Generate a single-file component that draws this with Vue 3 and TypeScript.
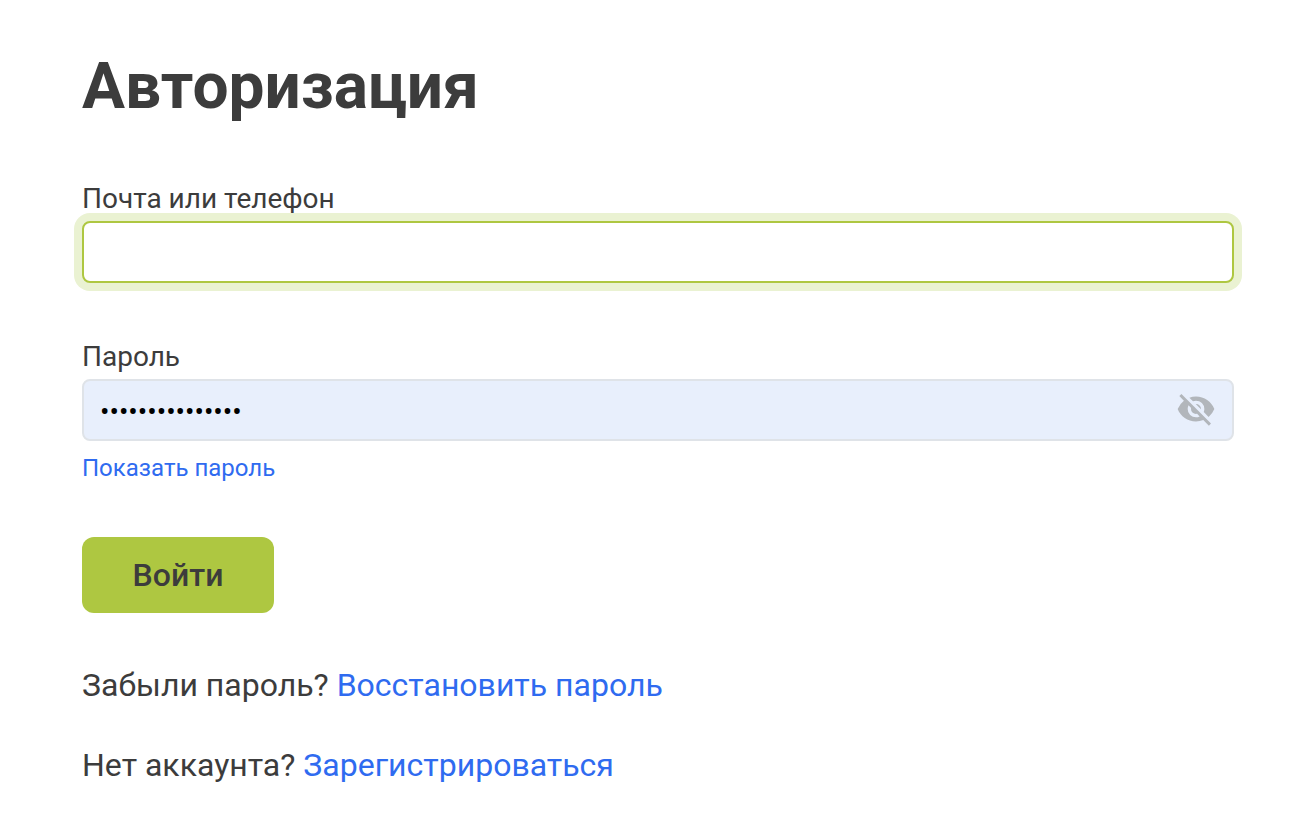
<script setup lang="ts">
const title: string = 'Авторизация'
</script>

<template>
  <main class="page">
    <h1 class="title">{{ title }}</h1>
    <form class="form" @submit.prevent>
      <div class="field first">
        <label class="label" for="login">Почта или телефон</label>
        <input id="login" class="input focused" type="text" />
      </div>
      <div class="field second">
        <label class="label" for="password">Пароль</label>
        <div class="password-box">
          <input id="password" class="input filled" type="password" value="•••••••••••••••" />
          <svg class="eye" viewBox="0 0 24 24" width="40" height="40" aria-hidden="true">
            <path fill="#b2b6bb" d="M12 7a5 5 0 0 1 5 5c0 .65-.13 1.26-.36 1.83l2.92 2.92A11.82 11.82 0 0 0 23 12c-1.73-4.39-6-7.5-11-7.5-1.4 0-2.74.25-3.98.7l2.16 2.16C10.74 7.13 11.35 7 12 7zM2 4.27l2.28 2.28.46.46A11.8 11.8 0 0 0 1 12c1.73 4.39 6 7.5 11 7.5 1.55 0 3.03-.3 4.38-.84l.42.42L19.73 22 21 20.73 3.27 3 2 4.27zM7.53 9.8l1.55 1.55A2.82 2.82 0 0 0 9 12a3 3 0 0 0 3 3c.22 0 .44-.03.65-.08l1.55 1.55c-.67.33-1.41.53-2.2.53a5 5 0 0 1-5-5c0-.79.2-1.53.53-2.2zm4.31-.78l3.15 3.15.02-.16a3 3 0 0 0-3-3l-.17.01z"/>
          </svg>
        </div>
        <a class="show" href="#">Показать пароль</a>
      </div>
      <button class="submit" type="submit">Войти</button>
    </form>
    <p class="line forgot">Забыли пароль? <a href="#">Восстановить пароль</a></p>
    <p class="line register">Нет аккаунта? <a href="#">Зарегистрироваться</a></p>
  </main>
</template>

<style>
html, body { margin: 0; background: #fff; }
</style>

<style scoped>
.page {
  box-sizing: border-box;
  width: 1314px;
  height: 836px;
  padding: 49px 80px 0 82px;
  font-family: Roboto, "Liberation Sans", sans-serif;
  color: #3c3c3c;
  overflow: hidden;
}
.title {
  margin: 0;
  font-size: 64px;
  line-height: 76px;
  font-weight: 700;
}
.form { display: flex; flex-direction: column; align-items: flex-start; }
.field { width: 100%; display: flex; flex-direction: column; }
.first { margin-top: 59px; }
.second { margin-top: 59px; }
.label { font-size: 28px; line-height: 30px; margin-bottom: 7px; }
.input {
  box-sizing: border-box;
  display: block;
  width: 100%;
  height: 62px;
  border-radius: 8px;
  border: 2px solid #dfe3e8;
  padding: 2px 16px 0;
  background: #fff;
  outline: none;
  font-family: Roboto, "Liberation Sans", sans-serif;
}
.focused { border-color: #aec741; box-shadow: 0 0 0 8px #eaf2d2; }
.filled { background: #e8effc; font-size: 28px; color: #000; }
.password-box { position: relative; }
.eye { position: absolute; right: 18px; top: 10px; }
.show { color: #2f6bf0; font-size: 24px; line-height: 28px; margin-top: 13px; text-decoration: none; }
.submit {
  margin-top: 55px;
  width: 192px;
  height: 76px;
  border: 0;
  border-radius: 12px;
  background: #aec741;
  color: #3c3c3c;
  font-family: Roboto, "Liberation Sans", sans-serif;
  font-size: 32px;
  font-weight: 500;
}
.line { margin: 0; font-size: 32px; line-height: 38px; }
.line a { color: #2f6bf0; text-decoration: none; }
.forgot { margin-top: 53px; }
.register { margin-top: 42px; }
</style>
